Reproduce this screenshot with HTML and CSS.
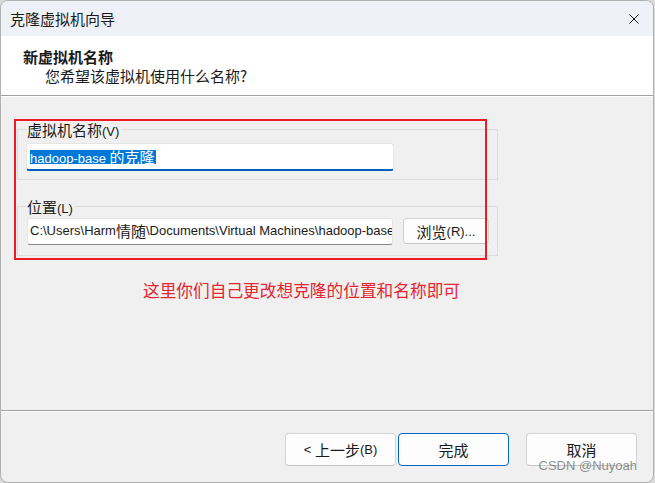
FILE: index.html
```html
<!DOCTYPE html>
<html lang="zh-CN">
<head>
<meta charset="utf-8">
<title>克隆虚拟机向导</title>
<link rel="stylesheet" href="styles.css">
</head>
<body>
<div class="window">
  <div class="titlebar">
    <span class="title">克隆虚拟机向导</span>
    <svg class="close" width="10" height="10" viewBox="0 0 10 10"><path d="M0.5 0.5L9.5 9.5M9.5 0.5L0.5 9.5" stroke="#1a1a1a" stroke-width="1" fill="none"/></svg>
  </div>
  <div class="header">
    <div class="h-title">新虚拟机名称</div>
    <div class="h-sub">您希望该虚拟机使用什么名称?</div>
  </div>
  <div class="body">
    <fieldset class="group g1">
      <legend>虚拟机名称<span class="l">(V)</span></legend>
      <div class="textbox focused"><span class="sel"><span class="l">hadoop-base&nbsp;</span>的克隆</span></div>
    </fieldset>
    <fieldset class="group g2">
      <legend>位置<span class="l">(L)</span></legend>
      <div class="row">
        <div class="textbox path"><span class="l">C:\Users\Harm</span><span class="cj">情随</span><span class="l">\Documents\Virtual Machines\hadoop-base</span></div>
        <button class="btn browse">浏览<span class="l">(R)...</span></button>
      </div>
    </fieldset>
    <p class="note">这里你们自己更改想克隆的位置和名称即可</p>
    <div class="annot"></div>
  </div>
  <div class="footer">
    <button class="btn wide back"><span class="l">&lt;&nbsp;</span>上一步<span class="l">(B)</span></button>
    <button class="btn wide primary">完成</button>
    <button class="btn wide cancel">取消</button>
    <span class="watermark">CSDN @Nuyoah</span>
  </div>
</div>
</body>
</html>
```
FILE: styles.css
```css
* { box-sizing: border-box; }
html, body { margin: 0; padding: 0; }
body {
  width: 655px;
  height: 483px;
  background: #d9d9d9;
  font-family: "Noto Sans CJK SC", sans-serif;
  font-size: 15px;
  color: #1a1a1a;
  overflow: hidden;
}
.l { font-family: "Liberation Sans", Arial, sans-serif; font-size: 13px; }

.window {
  width: 654px;
  height: 483px;
  border: 1px solid #b0b0b0;
  border-radius: 8px;
  overflow: hidden;
  display: flex;
  flex-direction: column;
  background: #f0f0f0;
}

.titlebar {
  height: 35px;
  flex: none;
  background: #eef2f8;
  display: flex;
  align-items: center;
  justify-content: space-between;
  padding: 0 14px 0 9px;
}
.title { line-height: 20px; }
.close { display: block; }

.header {
  height: 60px;
  flex: none;
  background: #fff;
  border-bottom: 1px solid #a0a0a0;
  padding: 11px 0 0 22px;
}
.h-title { font-weight: bold; line-height: 19px; }
.h-sub { line-height: 19px; padding-left: 22px; }

.body {
  flex: 1;
  position: relative;
  border-top: 1px solid #fff;
  padding: 23px 0 0 16px;
}

.group {
  margin: 0;
  padding: 4px 8px 8px 8px;
  border: 1px solid #dcdcdc;
  width: 481px;
  min-width: 0;
}
.group legend {
  padding: 0 2px 0 1px;
  line-height: 19px;
  height: 19px;
}
.g2 { margin-top: 17px; padding-top: 2px; padding-bottom: 10px; }

.textbox {
  height: 28px;
  width: 368px;
  background: #fff;
  border: 1px solid #e5e5e5;
  border-bottom: 2px solid #005fb8;
  border-radius: 3px;
  padding-left: 3px;
  display: flex;
  align-items: center;
  white-space: nowrap;
  overflow: hidden;
}
.sel {
  background: #0078d7;
  color: #fff;
  line-height: 14px;
  height: 14px;
  display: inline-block;
  padding-right: 1px;
  white-space: nowrap;
}
.row { display: flex; align-items: flex-start; }
.path {
  margin-left: 1px;
  width: 366px;
  height: 27px;
  padding-left: 2px;
  padding-bottom: 2px;
  border-bottom: 1px solid #868686;
}
.cj { font-size: 15px; }

.btn {
  font: inherit;
  color: #1a1a1a;
  background: #fdfdfd;
  border: 1px solid #d3d3d3;
  border-bottom-color: #c4c4c4;
  border-radius: 4px;
  padding: 0;
  display: flex;
  align-items: center;
  justify-content: center;
  white-space: nowrap;
}
.browse { margin-left: 10px; width: 86px; height: 26px; }

.note {
  margin: 24px 0 0 126px;
  color: #e5252f;
  font-size: 16.7px;
  line-height: 20px;
}

.annot {
  position: absolute;
  left: 13px;
  top: 22px;
  width: 473px;
  height: 141px;
  border: 2px solid #ed1c24;
}

.footer {
  height: 72px;
  flex: none;
  position: relative;
  border-top: 1px solid #a0a0a0;
  box-shadow: inset 0 1px 0 #fff;
  display: flex;
  justify-content: flex-end;
  align-items: flex-start;
  padding: 22px 16px 0 0;
}
.wide { width: 111px; height: 33px; }
.primary { margin-left: 2px; border-color: #0067c0; }
.cancel { margin-left: 17px; }

.watermark {
  position: absolute;
  right: 16px;
  top: 47px;
  line-height: 16px;
  font-family: "Liberation Sans", Arial, sans-serif;
  font-size: 13px;
  color: rgba(95, 95, 95, 0.7);
}
```
